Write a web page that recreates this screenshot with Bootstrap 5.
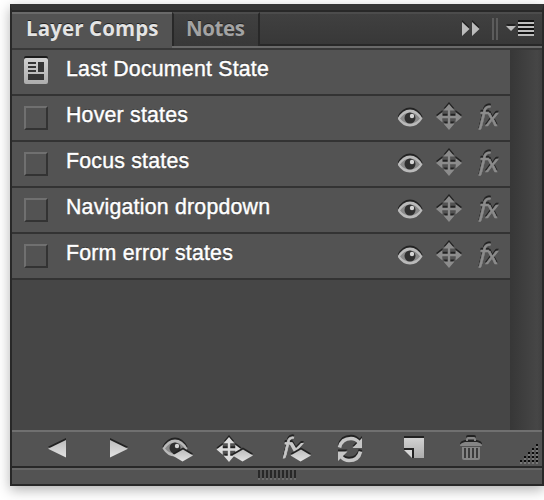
<!DOCTYPE html>
<html lang="en">
<head>
<meta charset="utf-8">
<meta name="viewport" content="width=device-width, initial-scale=1">
<title>Layer Comps</title>
<link href="https://cdn.jsdelivr.net/npm/bootstrap@5.3.0/dist/css/bootstrap.min.css" rel="stylesheet">
<style>
body{background:#fff;width:544px;height:500px;overflow:hidden;font-family:"Liberation Sans",Arial,sans-serif}
.panel{margin:4px 0 0 10px;width:534px;height:482px;background:#535353;border:2px solid #282828;border-top:6px solid #353535;box-shadow:0 4px 12px rgba(0,0,0,.3)}
.tabbar{height:38px;border-top:2px solid #282828;background:#535353}
.ptab{font:bold 20.5px/29px "Open Sans","Noto Sans",sans-serif;text-shadow:0 -1px 0 #222;white-space:nowrap}
.ptab.on{width:160px;height:36px;padding-left:14px;border-top:2px solid #6a6a6a;color:#e4e4e4;letter-spacing:.1px}
.ptab.off{width:88px;height:34px;padding-left:12px;background:linear-gradient(#404040,#383838);border:2px solid #282828;border-top-color:#4c4c4c;border-bottom:0;color:#a3a3a3;letter-spacing:-.4px}
.tabrest{background:linear-gradient(#404040,#383838);border-top:2px solid #4c4c4c}
.inactive{border-bottom:2px solid #6a6a6a}
.inactive>div{border-bottom:2px solid #282828;height:34px}
.listing{height:382px;border-top:2px solid #383838;background:#464646}
.comp{height:46px;background:#535353;border-bottom:2px solid #333;padding-left:12px}
.comp-name{color:#fff;font-size:21.3px;letter-spacing:.22px;line-height:24px;margin:7px 0 0 18px;text-shadow:0 -1px 0 #333;-webkit-text-stroke:.4px #fff;white-space:nowrap}
.slot{width:24px;height:24px;margin-top:10px;border:2px solid;border-color:#707070 #333 #333 #707070}
.scroller{width:32px;background:linear-gradient(90deg,#373737,#464646 85%,#404040)}
.toolbar{height:38px;border-top:2px solid #707070;border-bottom:2px solid #282828}
.foot{height:14px;border-top:2px solid #666}
svg{display:block;flex:none}
.toolbar svg{overflow:visible}
.sh{filter:drop-shadow(0 -1.6px 0 #222)}
.fx{font-family:Lato,sans-serif;font-style:italic}
</style>
</head>
<body>
<svg width="0" height="0" class="position-absolute">
<defs>
<linearGradient id="g" x1="0" y1="0" x2="0" y2="1"><stop offset="0" stop-color="#bcbcbc"/><stop offset="1" stop-color="#e2e2e2"/></linearGradient>
<linearGradient id="doc" x1="0" y1="0" x2="0" y2="1"><stop offset="0" stop-color="#d2d2d2"/><stop offset="1" stop-color="#adadad"/></linearGradient>
<pattern id="bars" x="0" y="0" width="4" height="10" patternUnits="userSpaceOnUse"><path d="M0 0h2v8H0z" fill="#282828"/><path d="M0 8h2v2H0z" fill="#6a6a6a"/></pattern>
<symbol id="eye" viewBox="0 0 26 20"><path d="M.5 10.500Q5.500 1.500 13 1.500T25.500 10.500Q20.500 18.500 13 18.500T.5 10.500Z" fill="#bababa"/><path d="M3 10.500Q7 4.500 13 4.500T23 10.500Q19 15.500 13 15.500T3 10.500Z" fill="#8a8a8a"/><circle cx="13" cy="10" r="5.500" fill="#303030"/><circle cx="15" cy="8" r="2.200" fill="#d5d5d5"/></symbol>
<symbol id="move" viewBox="0 0 26 26"><path d="M13 0L18.500 6.500H14.300V11.700H19.500V8L26 13L19.500 18.500V14.300H14.300V19.500H18.500L13 26L7.500 19.500H11.700V14.300H6.500V18.500L0 13L6.500 8V11.700H11.700V6.500H7.500Z" fill="currentColor"/></symbol>
<symbol id="fx" viewBox="0 0 28 32" overflow="visible"><g class="fx" fill="currentColor" stroke="currentColor" stroke-width=".5"><text transform="translate(4 23) skewX(-7)" font-size="28">f</text><text x="12.200" y="23" font-size="26">x</text></g></symbol>
<symbol id="controls" viewBox="398 96 112 44"><g class="sh"><use href="#eye" x="397" y="108" width="26" height="20"/></g><g class="sh" color="#8c8c8c"><use href="#move" x="436" y="104" width="26" height="26"/><use href="#fx" x="474" y="103" width="28" height="32"/></g></symbol>
</defs>
</svg>
<main class="panel d-flex flex-column">
  <header class="tabbar d-flex">
    <div class="ptab on">Layer Comps</div>
    <div class="inactive d-flex flex-grow-1">
      <div class="ptab off">Notes</div>
      <div class="tabrest d-flex flex-grow-1 justify-content-end">
        <svg width="84" height="30" viewBox="458 14 84 30"><g class="sh" fill="#bcbcbc"><path d="M462 22L469.500 29L462 36ZM472 22L479.500 29L472 36ZM506 26H516L511 31Z"/></g><path d="M492 18h2v22h-2zM496 18h2v22h-2z" fill="#5c5c5c"/><path d="M518 20h16v2h-16zM518 24h16v2h-16zM518 28h16v2h-16zM518 32h16v2h-16z" fill="#111"/><path d="M518 22h16v2h-16zM518 26h16v2h-16zM518 30h16v2h-16zM518 34h16v2h-16z" fill="#bcbcbc"/></svg>
      </div>
    </div>
  </header>
  <section class="listing d-flex">
    <div class="flex-grow-1">
      <div class="comp d-flex"><svg width="24" height="36" viewBox="24 50 24 36"><rect x="24" y="56" width="24" height="26" rx="2" fill="#1c1c1c"/><rect x="24" y="58" width="24" height="26" rx="2" fill="url(#doc)"/><path d="M28 62h8v2h-8zM28 66h8v2h-8zM28 70h8v2h-8zM38 62h6v10h-6zM28 74h16v6h-16z" fill="#353535"/></svg><div class="comp-name">Last Document State</div></div>
      <div class="comp d-flex"><div class="slot"></div><div class="comp-name">Hover states</div><svg class="ms-auto" width="112" height="44"><use href="#controls" width="112" height="44"/></svg></div>
      <div class="comp d-flex"><div class="slot"></div><div class="comp-name">Focus states</div><svg class="ms-auto" width="112" height="44"><use href="#controls" width="112" height="44"/></svg></div>
      <div class="comp d-flex"><div class="slot"></div><div class="comp-name">Navigation dropdown</div><svg class="ms-auto" width="112" height="44"><use href="#controls" width="112" height="44"/></svg></div>
      <div class="comp d-flex"><div class="slot"></div><div class="comp-name">Form error states</div><svg class="ms-auto" width="112" height="44"><use href="#controls" width="112" height="44"/></svg></div>
    </div>
    <div class="scroller"></div>
  </section>
  <footer class="toolbar d-flex">
    <svg width="136" height="34" viewBox="12 434 136 34"><g class="sh" fill="url(#g)"><path d="M66 442V459.500L48 450.800Z"/><path d="M110 442V459.500L128 450.800Z"/></g></svg>
    <svg width="180" height="34" viewBox="148 434 180 34">
      <g class="sh"><use href="#eye" x="162" y="440" width="26" height="20"/></g>
      <g class="sh" color="#dcdcdc"><use href="#move" x="216" y="439" width="26" height="25"/></g>
      <g class="sh" fill="#c8c8c8"><text class="fx" transform="translate(282.500 457) skewX(-7)" font-size="25" stroke="#c8c8c8" stroke-width=".7">f</text><path d="M289 445h4l3 5l5-5h3l-8 9h-2z"/></g>
      <g class="sh" fill="url(#g)"><path d="M172.500 457.500L183 451.500L193 457.500L182.500 463.500Z"/><path d="M232.500 457.500L243 451.500L253 457.500L242.500 463.500Z"/><path d="M290.500 457.500L301 451.500L311 457.500L300.500 463.500Z"/></g>
    </svg>
    <svg width="170" height="34" viewBox="328 434 170 34">
      <g class="sh" fill="none" stroke="#c6c6c6" stroke-width="3.600"><path d="M339.500 449.500C341 443 346 440.500 351 440.500C354.500 440.500 357 442 359 444.500"/><path d="M360.500 453.500C359 460 354 462.500 349 462.500C345.500 462.500 343 461 341 458.500"/><path d="M362 440V450H352.500ZM338 463V453.500H347.500Z" fill="#c6c6c6" stroke="none"/></g>
      <path d="M404 438h20v3h-20z" fill="#222"/><path d="M404 440H424V460H414V450H404Z" fill="url(#doc)"/><path d="M404 450h10v10h-2v-8h-8z" fill="#222"/><path d="M404 452H412V460Z" fill="#d8d8d8"/>
      <g class="sh" fill="none" stroke="#858585"><path d="M467 443v-2q0-1 1-1h6q1 0 1 1v2" stroke-width="2"/><path d="M460 448q0-3 5-4h12q5 1 5 4z" fill="#858585" stroke="none"/></g><path d="M462 449H480V460q0 2-2 2H464q-2 0-2-2Z" fill="#858585"/><path d="M464 450h2v10h-2zM468 450h2v10h-2zM472 450h2v10h-2zM476 450h2v10h-2z" fill="#3c3c3c"/>
    </svg>
    <svg class="ms-auto" width="24" height="34" viewBox="518 434 24 34"><path d="M536 446h2v2h-2zM532 450h2v2h-2zM536 450h2v2h-2zM528 454h2v2h-2zM532 454h2v2h-2zM536 454h2v2h-2zM524 458h2v2h-2zM528 458h2v2h-2zM532 458h2v2h-2zM536 458h2v2h-2zM520 462h2v2h-2zM524 462h2v2h-2zM528 462h2v2h-2zM532 462h2v2h-2zM536 462h2v2h-2z" fill="#0a0a0a"/><path d="M536 448h2v2h-2zM532 452h2v2h-2zM536 452h2v2h-2zM528 456h2v2h-2zM532 456h2v2h-2zM536 456h2v2h-2zM524 460h2v2h-2zM528 460h2v2h-2zM532 460h2v2h-2zM536 460h2v2h-2zM520 464h2v2h-2zM524 464h2v2h-2zM528 464h2v2h-2zM532 464h2v2h-2zM536 464h2v2h-2z" fill="#777"/></svg>
  </footer>
  <div class="foot d-flex justify-content-center"><svg width="38" height="10"><rect width="38" height="10" fill="url(#bars)"/></svg></div>
</main>
<script src="https://cdn.jsdelivr.net/npm/bootstrap@5.3.0/dist/js/bootstrap.bundle.min.js"></script>
</body>
</html>
